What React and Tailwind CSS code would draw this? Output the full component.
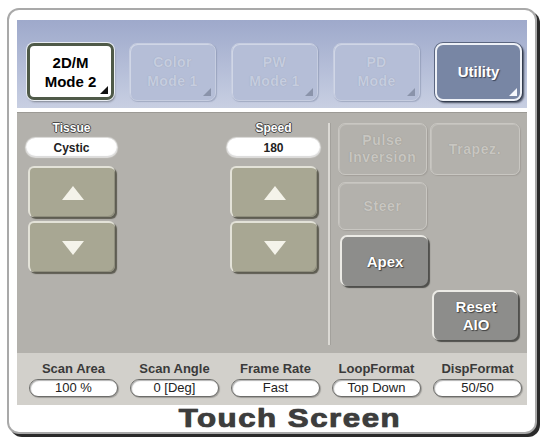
import React from "react";

const FONT = { fontFamily: '"Liberation Sans", Arial, sans-serif' };

function Corner({ color, className = "" }) {
  return (
    <svg width="8" height="8" viewBox="0 0 8 8" className={"absolute " + className}>
      <path d="M8 0 L8 8 L0 8 Z" fill={color} />
    </svg>
  );
}

function HeaderBtn({ l1, l2, kind }) {
  if (kind === "sel") {
    return (
      <div className="relative w-[87px] h-[57px] rounded-[7px] bg-white border-[3px] border-[#4f5a48] shadow-[0_0_0_1px_#e9edf3,1px_2px_2px_rgba(0,0,0,0.35)] flex flex-col items-center justify-center">
        <div className="text-[15px] leading-[19px] font-bold text-black">{l1}</div>
        <div className="text-[15px] leading-[19px] font-bold text-black">{l2}</div>
        <Corner color="#111" className="right-[3px] bottom-[3px]" />
      </div>
    );
  }
  if (kind === "util") {
    return (
      <div className="relative w-[87px] h-[58px] rounded-[8px] bg-[#7886a4] border-2 border-[#eef1f7] shadow-[2px_2px_2px_rgba(40,48,64,0.8),0_0_0_1px_#5b6680] flex items-center justify-center">
        <div className="text-[15px] font-bold text-white [text-shadow:1px_1px_1px_#3c4458]">{l1}</div>
        <Corner color="#f4f6fb" className="right-[3px] bottom-[3px]" />
      </div>
    );
  }
  return (
    <div className="relative w-[87px] h-[58px] rounded-[8px] bg-[#b5bed7] border border-[#c6cde0] shadow-[inset_1px_1px_0_#d0d6e6,1px_1px_1px_rgba(120,130,160,0.45)] flex flex-col items-center justify-center">
      <div className="text-[14px] leading-[19px] font-bold tracking-[0.4px] text-[#c6cddf] [text-shadow:0_0_1px_#97a0b8]">{l1}</div>
      <div className="text-[14px] leading-[19px] font-bold tracking-[0.4px] text-[#c6cddf] [text-shadow:0_0_1px_#97a0b8]">{l2}</div>
      <Corner color="#8a93aa" className="right-[4px] bottom-[4px]" />
    </div>
  );
}

function ArrowBtn({ up, extra = "" }) {
  return (
    <div className={"w-[87px] h-[51px] rounded-[6px] bg-[#a8a793] border-t-2 border-l-2 border-[#e3e2d8] shadow-[2px_2px_1px_#5e5d52,inset_-1px_-1px_0_#8f8e7d] flex items-center justify-center " + extra}>
      <svg width="22" height="14" viewBox="0 0 22 14">
        {up ? (
          <path d="M11 0 L22 14 L0 14 Z" fill="#f4f3ea" />
        ) : (
          <path d="M0 0 L22 0 L11 14 Z" fill="#f4f3ea" />
        )}
      </svg>
    </div>
  );
}

function Label({ children }) {
  return (
    <div className="text-[12px] leading-[13px] font-bold text-white [text-shadow:-1px_0_#4a4a4a,1px_0_#4a4a4a,0_-1px_#4a4a4a,0_1px_#4a4a4a]">
      {children}
    </div>
  );
}

function TopPill({ children, w }) {
  return (
    <div className={"mt-[3px] h-[19px] rounded-full bg-white shadow-[0_0_1px_1px_rgba(255,255,255,0.6),inset_0_-1px_1px_rgba(0,0,0,0.15)] flex items-center justify-center text-[12px] font-bold text-[#222] " + w}>
      {children}
    </div>
  );
}

function Dis({ children, cls }) {
  return (
    <div className={"rounded-[7px] border border-[#c9c7c2] shadow-[inset_1px_1px_0_#c2c0bb,1px_1px_1px_#a29f9a] flex flex-col items-center justify-center text-[14px] leading-[17px] font-bold tracking-[0.6px] text-[#c8c6c1] [text-shadow:0_0_1px_#8f8d88] " + cls}>
      {children}
    </div>
  );
}

function Act({ children, cls }) {
  return (
    <div className={"rounded-[7px] bg-[#8d8d8b] border-t-2 border-l-2 border-[#ecebe6] shadow-[2px_2px_1px_#4f4f4c] flex flex-col items-center justify-center text-[15px] leading-[18px] font-bold text-white [text-shadow:0_0_1px_#333,1px_1px_1px_#444] " + cls}>
      {children}
    </div>
  );
}

function Status({ label, value }) {
  return (
    <div className="w-[89px] flex flex-col items-center">
      <div className="text-[13px] leading-[13px] font-bold text-[#3a3a3a] whitespace-nowrap">{label}</div>
      <div className="mt-[4px] w-[89px] h-[18px] rounded-full bg-white border border-[#6d6d6a] shadow-[inset_1px_1px_1px_rgba(0,0,0,0.3),1px_1px_1px_rgba(0,0,0,0.25)] flex items-center justify-center text-[13px] leading-[14px] text-[#222]">
        {value}
      </div>
    </div>
  );
}

export default function App() {
  return (
    <div className="w-[546px] h-[443px] bg-white pt-[8px] pl-[7px]" style={FONT}>
      <div className="w-[530px] h-[426px] rounded-[12px] border-2 border-[#a9a9a9] bg-white shadow-[3px_3px_0_0_#2a2a2a] pt-[10px] px-[8px] flex flex-col">
        {/* Header */}
        <div className="h-[88px] bg-[linear-gradient(to_bottom,#9ea9cb,#b5bed8_55%,#c8cfe2)] flex items-start pt-[23px] pl-[10px] gap-[15px]">
          <HeaderBtn kind="sel" l1="2D/M" l2="Mode 2" />
          <HeaderBtn l1="Color" l2="Mode 1" />
          <HeaderBtn l1="PW" l2="Mode 1" />
          <HeaderBtn l1="PD" l2="Mode" />
          <HeaderBtn kind="util" l1="Utility" />
        </div>

        {/* Main gray panel */}
        <div className="mt-[4px] h-[241px] bg-[#b3b1ac] border-t border-[#9c9a95] flex">
          <div className="w-[311px] flex pt-[9px] pl-[9px]">
            <div className="w-[91px] flex flex-col items-center">
              <Label>Tissue</Label>
              <TopPill w="w-[91px]">Cystic</TopPill>
              <ArrowBtn up extra="mt-[9px]" />
              <ArrowBtn extra="mt-[4px]" />
            </div>
            <div className="ml-[110px] w-[93px] flex flex-col items-center">
              <Label>Speed</Label>
              <TopPill w="w-[93px]">180</TopPill>
              <ArrowBtn up extra="mt-[9px]" />
              <ArrowBtn extra="mt-[4px]" />
            </div>
          </div>
          <div className="mt-[10px] mb-[8px] w-[3px] bg-[#dbd9d4] border-r border-[#a3a19c]" />
          <div className="pl-[7px] pt-[10px] flex flex-col">
            <div className="flex gap-[3px]">
              <Dis cls="w-[89px] h-[52px]">
                <div>Pulse</div>
                <div>Inversion</div>
              </Dis>
              <Dis cls="w-[90px] h-[52px]">Trapez.</Dis>
            </div>
            <Dis cls="mt-[7px] w-[89px] h-[48px]">Steer</Dis>
            <Act cls="mt-[5px] ml-[2px] w-[88px] h-[51px]">Apex</Act>
            <Act cls="mt-[4px] ml-[94px] w-[86px] h-[50px]">
              <div>Reset</div>
              <div>AIO</div>
            </Act>
          </div>
        </div>

        {/* Status bar */}
        <div className="h-[52px] bg-[#d2d0cb] flex pt-[9px] pl-[12px] gap-[12px]">
          <Status label="Scan Area" value="100 %" />
          <Status label="Scan Angle" value="0 [Deg]" />
          <Status label="Frame Rate" value="Fast" />
          <Status label="LoopFormat" value="Top Down" />
          <Status label="DispFormat" value="50/50" />
        </div>

        {/* Title */}
        <div className="flex-1 flex items-center justify-center pl-[36px]">
          <div className="inline-block scale-x-125 text-[25px] leading-[27px] font-bold tracking-[1.2px] text-[#3d3d3d] [-webkit-text-stroke:0.7px_#3d3d3d] [text-shadow:0_0_1px_#555]">
            Touch Screen
          </div>
        </div>
      </div>
    </div>
  );
}
